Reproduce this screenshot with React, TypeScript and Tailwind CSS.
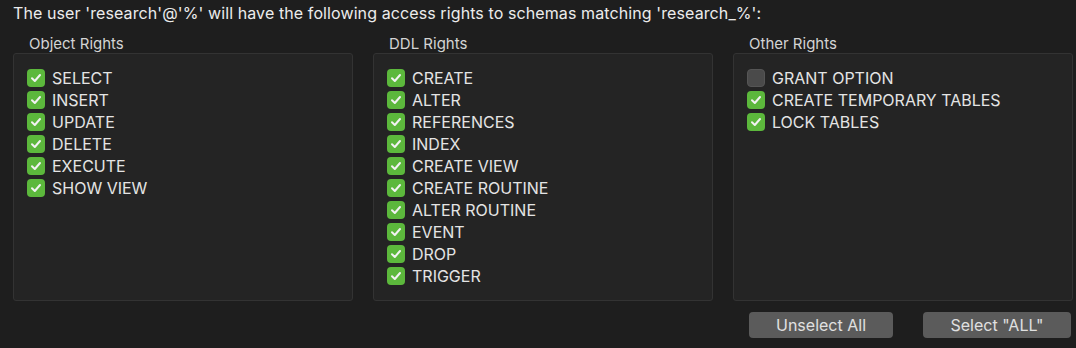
import React from 'react';

const groups = [
  {
    title: 'Object Rights',
    items: [
      ['SELECT', true],
      ['INSERT', true],
      ['UPDATE', true],
      ['DELETE', true],
      ['EXECUTE', true],
      ['SHOW VIEW', true],
    ],
  },
  {
    title: 'DDL Rights',
    items: [
      ['CREATE', true],
      ['ALTER', true],
      ['REFERENCES', true],
      ['INDEX', true],
      ['CREATE VIEW', true],
      ['CREATE ROUTINE', true],
      ['ALTER ROUTINE', true],
      ['EVENT', true],
      ['DROP', true],
      ['TRIGGER', true],
    ],
  },
  {
    title: 'Other Rights',
    items: [
      ['GRANT OPTION', false],
      ['CREATE TEMPORARY TABLES', true],
      ['LOCK TABLES', true],
    ],
  },
] as const;

function Check({ on }: { on: boolean }) {
  if (!on) {
    return <span className="w-[18px] h-[18px] rounded-[4px] bg-[#4a4a4a] border border-[#555] shrink-0" />;
  }
  return (
    <span className="w-[18px] h-[18px] rounded-[4px] bg-[#5cb83c] flex items-center justify-center shrink-0">
      <svg width="12" height="12" viewBox="0 0 12 12" fill="none">
        <path d="M2 6.3 L4.8 9 L10 3" stroke="#f2f2f2" strokeWidth="2" strokeLinecap="round" strokeLinejoin="round" />
      </svg>
    </span>
  );
}

export default function App() {
  return (
    <div
      className="w-[1076px] h-[348px] bg-[#1e1e1e] text-[#e6e6e6] overflow-hidden"
      style={{ fontFamily: 'Inter, "Liberation Sans", Arial, sans-serif' }}
    >
      <div className="pl-[13px] pt-[3px] text-[16px] leading-[20px] tracking-[0.1px] text-[#ececec]">
        The user 'research'@'%' will have the following access rights to schemas matching 'research_%':
      </div>
      <div className="flex gap-[20px] pl-[13px] pr-[3px] mt-[11px]">
        {groups.map((g) => (
          <div key={g.title} className="w-[340px] flex flex-col">
            <div className="pl-[16px] text-[15px] leading-[19px] text-[#d4d4d4]">{g.title}</div>
            <div className="h-[248px] bg-[#242424] border border-[#333] rounded-[3px] pl-[13px] pt-[13px]">
              {g.items.map(([label, on]) => (
                <div key={label} className="flex items-center gap-[7px] h-[22px]">
                  <Check on={on} />
                  <span className="text-[16px] text-[#e4e4e4]">{label}</span>
                </div>
              ))}
            </div>
          </div>
        ))}
      </div>
      <div className="flex justify-end gap-[30px] pr-[5px] mt-[11px]">
        <button className="w-[144px] h-[26px] rounded-[4px] bg-[#5b5b5b] text-[#e0e0e0] text-[16px]">Unselect All</button>
        <button className="w-[148px] h-[26px] rounded-[4px] bg-[#5b5b5b] text-[#e0e0e0] text-[16px]">Select "ALL"</button>
      </div>
    </div>
  );
}
